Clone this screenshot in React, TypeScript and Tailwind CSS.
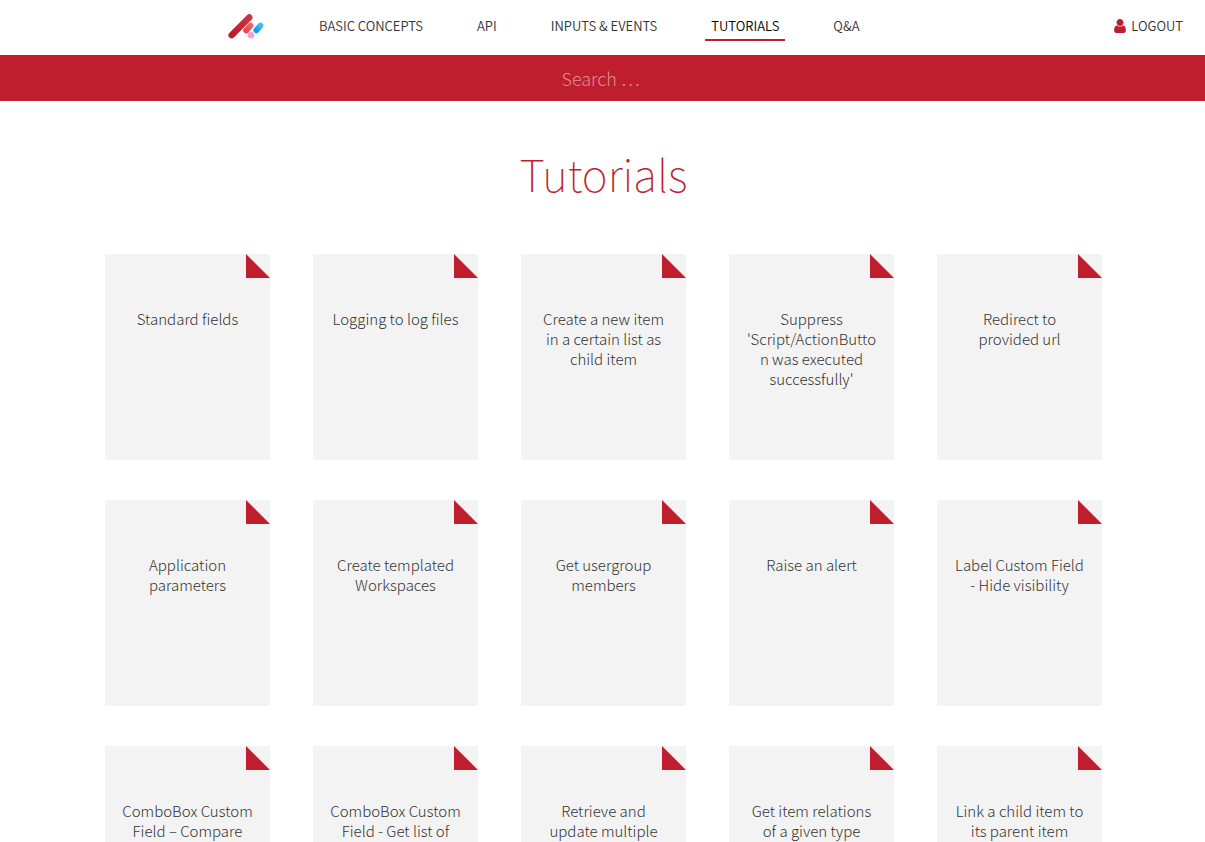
const navItems = [
  { label: 'BASIC CONCEPTS' },
  { label: 'API' },
  { label: 'INPUTS & EVENTS' },
  { label: 'TUTORIALS', active: true },
  { label: 'Q&A' },
];

const tutorials = [
  'Standard fields',
  'Logging to log files',
  'Create a new item in a certain list as child item',
  "Suppress 'Script/ActionButton was executed successfully'",
  'Redirect to provided url',
  'Application parameters',
  'Create templated Workspaces',
  'Get usergroup members',
  'Raise an alert',
  'Label Custom Field - Hide visibility',
  'ComboBox Custom Field – Compare',
  'ComboBox Custom Field - Get list of',
  'Retrieve and update multiple',
  'Get item relations of a given type',
  'Link a child item to its parent item',
];

function Logo() {
  return (
    <svg width="36" height="26" viewBox="0 0 36 26" fill="none" strokeLinecap="round" aria-hidden="true">
      <defs>
        <linearGradient id="red" x1="0" y1="1" x2="1" y2="0">
          <stop offset="0" stopColor="#bb1a2f" />
          <stop offset="1" stopColor="#c93442" />
        </linearGradient>
        <linearGradient id="coral" x1="0" y1="1" x2="1" y2="0">
          <stop offset="0" stopColor="#ef4550" />
          <stop offset="1" stopColor="#ea6660" />
        </linearGradient>
        <linearGradient id="blue" x1="0" y1="1" x2="1" y2="0">
          <stop offset="0" stopColor="#08a0ee" />
          <stop offset="1" stopColor="#45bdf0" />
        </linearGradient>
      </defs>
      <circle cx="23" cy="22.2" r="3.3" fill="#eda0cf" />
      <path d="M3.6 22.2 21.2 4.4" stroke="url(#red)" strokeWidth="6.4" />
      <path d="M18.2 17.4 22.4 12.8" stroke="url(#coral)" strokeWidth="6" />
      <path d="M28.4 17.2 32.4 12.8" stroke="url(#blue)" strokeWidth="6" />
    </svg>
  );
}

function UserIcon() {
  return (
    <svg width="12" height="14" viewBox="0 0 1280 1536" fill="#be1e2d" aria-hidden="true">
      <path d="M1280 1271q0 109-62.5 187t-150.5 78h-854q-88 0-150.5-78t-62.5-187q0-85 8.5-160.5t31.5-152 58.5-131 94-89 134.5-34.5q131 128 313 128t313-128q76 0 134.5 34.5t94 89 58.5 131 31.5 152 8.5 160.5zm-256-887q0 159-112.5 271.5t-271.5 112.5-271.5-112.5-112.5-271.5 112.5-271.5 271.5-112.5 271.5 112.5 112.5 271.5z" />
    </svg>
  );
}

export default function App() {
  return (
    <div className="min-h-screen bg-white font-['Noto_Sans_CJK_SC',sans-serif] font-light text-[#333]">
      <header className="flex h-[55px] items-start justify-between pr-[22px] pl-[228px] text-[13px] leading-5 font-[350]">
        <div className="flex items-start gap-[49px]">
          <a href="#home" aria-label="Home" className="pt-[13px]">
            <Logo />
          </a>
          <nav className="flex gap-[42px] pt-4">
            {navItems.map((item) => (
              <a
                key={item.label}
                href="#"
                aria-current={item.active ? 'page' : undefined}
                className={
                  item.active
                    ? 'border-b-2 border-[#be1e2d] px-1.5 pb-[3px] text-black'
                    : 'border-b-2 border-transparent px-1.5 pb-[3px]'
                }
              >
                {item.label}
              </a>
            ))}
          </nav>
        </div>
        <a href="#logout" className="flex items-center gap-[5px] pt-4">
          <UserIcon />
          LOGOUT
        </a>
      </header>

      <form role="search" className="bg-[#be1e2d]">
        <input
          type="text"
          aria-label="Search"
          placeholder="Search …"
          className="block h-[46px] w-full bg-transparent pr-1 text-center text-lg font-light text-white outline-none placeholder:text-[#e58d95]"
        />
      </form>

      <main>
        <h1 className="pt-10 pl-0.5 text-center text-[44px] leading-[64px] font-thin text-[#be1e2d]">Tutorials</h1>
        <ul className="mx-auto mt-[49px] grid max-w-[999px] grid-cols-[repeat(auto-fill,165px)] justify-center gap-x-[43px] gap-y-10 pl-0.5">
          {tutorials.map((title) => (
            <li key={title}>
              <a
                href="#"
                className="relative block h-[206px] overflow-hidden bg-[#f3f3f3] px-[15px] pt-[55px] text-center text-[15px] leading-5 break-words"
              >
                <span className="absolute top-0 right-0 size-6 bg-[#be1e2d] [clip-path:polygon(0_0,100%_100%,0_100%)]" />
                {title}
              </a>
            </li>
          ))}
        </ul>
      </main>
    </div>
  );
}
